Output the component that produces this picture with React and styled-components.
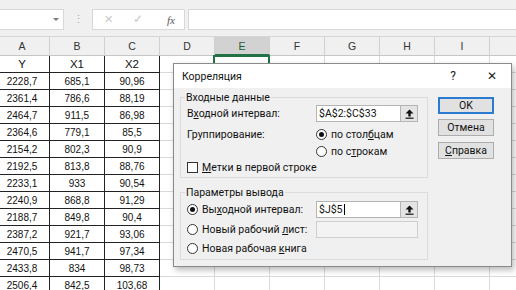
import React from 'react';
import styled, { createGlobalStyle } from 'styled-components';

const Global = createGlobalStyle`
  html, body { margin: 0; padding: 0; background: #fff; }
  body { width: 516px; height: 290px; overflow: hidden; font-family: "Liberation Sans", Arial, sans-serif; }
`;

const Page = styled.div`
  position: relative;
  width: 516px;
  height: 290px;
  overflow: hidden;
  background: #fff;
`;

/* ---------- formula bar ---------- */
const Toolbar = styled.div`
  height: 37px;
  box-sizing: border-box;
  background: #f0f0f0;
  display: flex;
  align-items: flex-start;
  padding-top: 9px;
  border-bottom: 1px solid #d6d6d6;
`;
const NameBox = styled.div`
  width: 64px;
  height: 21px;
  box-sizing: border-box;
  background: #fff;
  border: 1px solid #d8d8d8;
  border-left: none;
  display: flex;
  align-items: center;
  justify-content: flex-end;
  padding-right: 4px;
`;
const Caret = styled.div`
  width: 0;
  height: 0;
  border-left: 3px solid transparent;
  border-right: 3px solid transparent;
  border-top: 3px solid #777;
`;
const Grip = styled.div`
  width: 28px;
  height: 21px;
  display: flex;
  align-items: center;
  justify-content: center;
  color: #aaa;
  font-size: 11px;
`;
const FxBox = styled.div`
  width: 93px;
  height: 21px;
  box-sizing: border-box;
  background: #fff;
  border: 1px solid #d8d8d8;
  display: flex;
  align-items: center;
  padding-left: 8px;
`;
const FxIcon = styled.span`
  width: ${p => p.$w}px;
  display: flex;
  justify-content: center;
  align-items: center;
  color: ${p => p.$c || '#c8c8c8'};
  font-family: "Liberation Serif", serif;
  font-style: ${p => (p.$italic ? 'italic' : 'normal')};
  font-size: ${p => p.$fs || 11}px;
`;
const FormulaInput = styled.div`
  flex: 1;
  height: 21px;
  box-sizing: border-box;
  margin-left: 3px;
  background: #fff;
  border: 1px solid #d8d8d8;
  border-right: none;
`;

/* ---------- sheet ---------- */
const Sheet = styled.div`
  display: grid;
  grid-template-columns: repeat(10, 55px);
  grid-template-rows: 19px;
  grid-auto-rows: 17px;
  margin-left: -5px;
`;
const ColHead = styled.div`
  background: ${p => (p.$sel ? '#d2d2d2' : '#f0f0f0')};
  border-right: 1px solid #d0d0d0;
  border-bottom: ${p => (p.$sel ? '2px solid #217346' : '1px solid #c6c6c6')};
  box-sizing: border-box;
  display: flex;
  align-items: center;
  justify-content: center;
  font-family: "Liberation Sans", Arial, sans-serif;
  font-size: 10.5px;
  color: ${p => (p.$sel ? '#1e5c38' : '#333')};
`;
const Cell = styled.div`
  position: relative;
  box-sizing: border-box;
  border-right: 1px solid ${p => (p.$table ? '#222' : '#dadada')};
  border-bottom: 1px solid ${p => (p.$table ? '#222' : '#dadada')};
  display: flex;
  align-items: center;
  justify-content: center;
  font-family: "Liberation Sans", Arial, sans-serif;
  font-size: ${p => (p.$head ? '11.5px' : '10px')};
  color: #111;
`;
const ActiveFrame = styled.div`
  position: absolute;
  left: -2px;
  top: -1px;
  right: -1px;
  bottom: -1px;
  border: 2px solid #217346;
`;

/* ---------- dialog ---------- */
const Dialog = styled.div`
  position: absolute;
  left: 173px;
  top: 63px;
  width: 339px;
  height: 204px;
  box-sizing: border-box;
  border: 1px solid #8a8a8a;
  background: #f0f0f0;
  box-shadow: 2px 3px 6px rgba(0, 0, 0, 0.28);
  display: flex;
  flex-direction: column;
  font-family: Roboto, "Noto Sans", sans-serif;
  font-size: 10.5px;
  color: #111;
`;
const TitleBar = styled.div`
  height: 24px;
  background: #fff;
  display: flex;
  align-items: center;
  padding-left: 8px;
  font-size: 10.5px;
`;
const Title = styled.div`
  flex: 1;
`;
const TitleBtn = styled.div`
  width: ${p => p.$w}px;
  display: flex;
  justify-content: center;
  align-items: center;
  font-size: 12px;
  color: #222;
`;
const Body = styled.div`
  flex: 1;
  display: flex;
  padding: 0 0 0 6px;
`;
const Groups = styled.div`
  width: 248px;
  display: flex;
  flex-direction: column;
  gap: 5px;
`;
const Group = styled.fieldset`
  margin: 2px 0 0 0;
  padding: 0 6px 0 6px;
  min-width: 0;
  height: ${p => p.$h}px;
  box-sizing: border-box;
  border: 1px solid #dcdcdc;
  display: flex;
  flex-direction: column;
`;
const Legend = styled.legend`
  padding: 0 1px;
  margin-left: -2px;
  line-height: 15px;
`;
const Row = styled.div`
  display: flex;
  align-items: center;
  height: ${p => p.$h || 17}px;
  margin-top: ${p => p.$mt || 0}px;
`;
const Label = styled.div`
  width: ${p => p.$w || 129}px;
  white-space: nowrap;
`;
const Field = styled.div`
  width: 102px;
  height: 17px;
  box-sizing: border-box;
  display: flex;
  background: ${p => (p.$disabled ? '#f3f3f3' : '#fff')};
  border: 1px solid ${p => (p.$disabled ? '#cfcfcf' : '#b4b4b4')};
`;
const FieldText = styled.div`
  flex: 1;
  padding-left: 2px;
  display: flex;
  align-items: center;
`;
const Caretline = styled.span`
  display: inline-block;
  width: 1px;
  height: 11px;
  background: #000;
  margin-left: 1px;
`;
const Collapse = styled.div`
  width: 16px;
  background: #e4e4e4;
  border-left: 1px solid #b4b4b4;
  display: flex;
  align-items: center;
  justify-content: center;
`;
const Choice = styled.label`
  display: flex;
  align-items: center;
  gap: 4px;
  white-space: nowrap;
`;
const Radio = styled.span`
  flex: none;
  width: 11px;
  height: 11px;
  box-sizing: border-box;
  border-radius: 50%;
  border: 1px solid #333;
  background: #fff;
  display: flex;
  align-items: center;
  justify-content: center;
  &::after {
    content: '';
    width: 5px;
    height: 5px;
    border-radius: 50%;
    background: ${p => (p.$on ? '#111' : 'transparent')};
  }
`;
const Check = styled.span`
  flex: none;
  width: 11px;
  height: 11px;
  box-sizing: border-box;
  border: 1px solid #333;
  background: #fff;
`;
const U = styled.span`
  text-decoration: underline;
`;
const Buttons = styled.div`
  margin-left: 10px;
  padding-top: 9px;
  display: flex;
  flex-direction: column;
`;
const Button = styled.div`
  width: 56px;
  height: 17px;
  box-sizing: border-box;
  margin-top: ${p => p.$mt || 0}px;
  background: #e1e1e1;
  border: ${p => (p.$default ? '2px solid #2b7bd3' : '1px solid #adadad')};
  display: flex;
  align-items: center;
  justify-content: center;
`;

const UpIcon = () => (
  <svg width="9" height="10" viewBox="0 0 9 10">
    <polygon points="4.5,0.5 8.5,4.5 0.5,4.5" fill="#111" />
    <rect x="3.3" y="4" width="2.4" height="3.5" fill="#111" />
    <rect x="0.5" y="8.6" width="8" height="1.2" fill="#111" />
  </svg>
);

const data = [
  ['Y', 'X1', 'X2'],
  ['2228,7', '685,1', '90,96'],
  ['2361,4', '786,6', '88,19'],
  ['2464,7', '911,5', '86,98'],
  ['2364,6', '779,1', '85,5'],
  ['2154,2', '802,3', '90,9'],
  ['2192,5', '813,8', '88,76'],
  ['2233,1', '933', '90,54'],
  ['2240,9', '868,8', '91,29'],
  ['2188,7', '849,8', '90,4'],
  ['2387,2', '921,7', '93,06'],
  ['2470,5', '941,7', '97,34'],
  ['2433,8', '834', '98,73'],
  ['2506,4', '842,5', '103,68'],
];
const cols = ['A', 'B', 'C', 'D', 'E', 'F', 'G', 'H', 'I', 'J'];

export default function App() {
  return (
    <Page>
      <Global />
      <Toolbar>
        <NameBox><Caret /></NameBox>
        <Grip>⋮</Grip>
        <FxBox>
          <FxIcon $w={14}>✕</FxIcon>
          <FxIcon $w={46} $fs={12}>✓</FxIcon>
          <FxIcon $w={20} $c="#555" $italic>fx</FxIcon>
        </FxBox>
        <FormulaInput />
      </Toolbar>
      <Sheet>
        {cols.map(c => (
          <ColHead key={c} $sel={c === 'E'}>{c === 'J' ? '' : c}</ColHead>
        ))}
        {data.map((row, r) =>
          cols.map((c, ci) => (
            <Cell key={c + r} $table={ci < 3} $head={r === 0}>
              {ci < 3 ? row[ci] : ''}
              {r === 0 && c === 'E' ? <ActiveFrame /> : null}
            </Cell>
          ))
        )}
      </Sheet>

      <Dialog>
        <TitleBar>
          <Title>Корреляция</Title>
          <TitleBtn $w={40}>?</TitleBtn>
          <TitleBtn $w={38}>✕</TitleBtn>
        </TitleBar>
        <Body>
          <Groups>
            <Group $h={88}>
              <Legend>Входные данные</Legend>
              <Row>
                <Label>В<U>х</U>одной интервал:</Label>
                <Field>
                  <FieldText>$A$2:$C$33</FieldText>
                  <Collapse><UpIcon /></Collapse>
                </Field>
              </Row>
              <Row $mt={4}>
                <Label>Группирование:</Label>
                <Choice><Radio $on /><span>по стол<U>б</U>цам</span></Choice>
              </Row>
              <Row $h={16}>
                <Label />
                <Choice><Radio /><span>по с<U>т</U>рокам</span></Choice>
              </Row>
              <Row $h={16}>
                <Choice><Check /><span><U>М</U>етки в первой строке</span></Choice>
              </Row>
            </Group>
            <Group $h={75}>
              <Legend>Параметры вывода</Legend>
              <Row $mt={1}>
                <Label><Choice><Radio $on /><span>Вы<U>х</U>одной интервал:</span></Choice></Label>
                <Field>
                  <FieldText>$J$5<Caretline /></FieldText>
                  <Collapse><UpIcon /></Collapse>
                </Field>
              </Row>
              <Row $mt={3}>
                <Label><Choice><Radio /><span>Новый рабочий <U>л</U>ист:</span></Choice></Label>
                <Field $disabled />
              </Row>
              <Row $mt={2}>
                <Choice><Radio /><span>Новая рабочая <U>к</U>нига</span></Choice>
              </Row>
            </Group>
          </Groups>
          <Buttons>
            <Button $default>OK</Button>
            <Button $mt={5}>Отмена</Button>
            <Button $mt={6}><span><U>С</U>правка</span></Button>
          </Buttons>
        </Body>
      </Dialog>
    </Page>
  );
}
